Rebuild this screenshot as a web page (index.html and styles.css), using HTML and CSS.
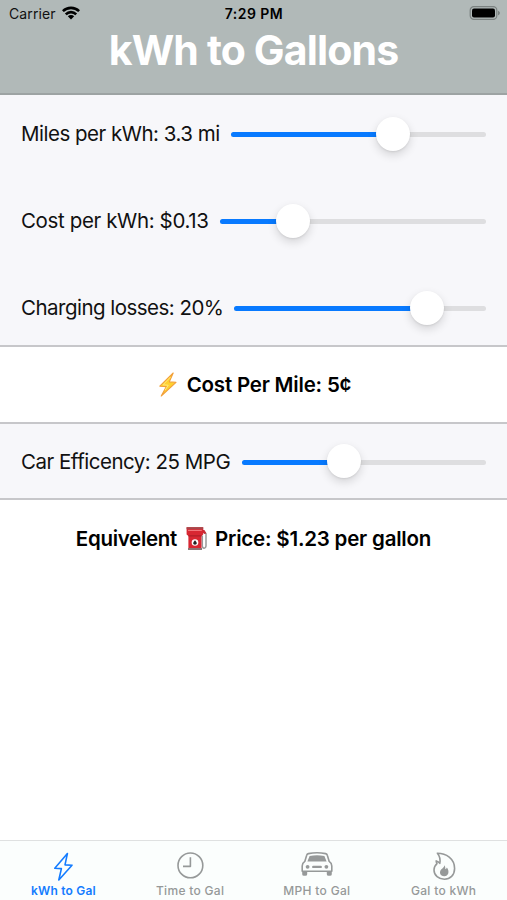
FILE: index.html
```html
<!DOCTYPE html>
<html lang="en">
<head>
<meta charset="utf-8">
<title>kWh to Gallons</title>
<link rel="stylesheet" href="styles.css">
</head>
<body>
<div class="app">
  <header class="header">
    <div class="status">
      <div class="carrier"><span>Carrier</span>
        <svg width="18" height="14" viewBox="0 0 18 14"><g fill="none" stroke="#000" stroke-width="2.6"><path d="M.9 5.2a11.5 11.5 0 0 1 16.2 0"/><path d="M3.8 8.3a7.4 7.4 0 0 1 10.4 0"/></g><path d="M5.8 10.3a4.5 4.5 0 0 1 6.4 0L9 13.6z"/></svg>
      </div>
      <div class="time">7:29 PM</div>
      <svg class="battery" width="31" height="14" viewBox="0 0 31 14"><rect x="1.2" y=".7" width="26.6" height="12.6" rx="3.6" fill="none" stroke="#7b8281" stroke-width="1.2"/><rect x="3" y="2.5" width="23" height="9" rx="2"/><path d="M29 4.7c2.5.8 2.5 3.8 0 4.6z" fill="#7b8281"/></svg>
    </div>
    <h1 class="title">kWh to Gallons</h1>
  </header>
  <main>
    <section class="panel">
      <div class="row miles"><label>Miles per kWh: 3.3 mi</label><div class="slider"><div class="fill" style="width:63.5%"></div><div class="knob"></div></div></div>
      <div class="row cost"><label>Cost per kWh: $0.13</label><div class="slider"><div class="fill" style="width:27.3%"></div><div class="knob"></div></div></div>
      <div class="row losses"><label>Charging losses: 20%</label><div class="slider"><div class="fill" style="width:76.6%"></div><div class="knob"></div></div></div>
    </section>
    <section class="result permile">
      <svg width="18" height="25" viewBox="0 0 18 25"><path d="M14.2 1 .8 14.2l6.6.4L2.2 24 17 10.3l-6.7-.4z" fill="#ffd12e" stroke="#f2a03b" stroke-width="1.1" stroke-linejoin="round"/><path d="M11.5 5 4 12.8l5.2.4L6.2 18" fill="none" stroke="#ffe77a"/></svg>
      <span>Cost Per Mile: 5¢</span>
    </section>
    <section class="panel single">
      <div class="row efficiency"><label>Car Efficency: 25 MPG</label><div class="slider"><div class="fill" style="width:41.8%"></div><div class="knob"></div></div></div>
    </section>
    <section class="result equivalent">
      <span class="before">Equivelent</span>
      <svg width="22" height="25" viewBox="0 0 22 25"><path d="M17 4.5l3 3.2v12c0 3.5-3.7 3-3.7 0V9.5" fill="none" stroke="#999" stroke-width="1.5"/><path d="M15.8 3.8l2.6.2 2 3.2-2 .8-2.4-2z" fill="#c92c35"/><path d="M.6 1.2h16.6v7.2l-1.7 1.7v12.2H2.4V10.1L.6 8.4z" fill="#d82732"/><path d="M.6 1.2h16.6v2H.6z" fill="#a6474b"/><path d="M2 4.4h13.8" stroke="#f58084"/><path d="M2.4 9.9h13.1" stroke="#a51d27"/><path d="M2 22h14v2H2z" fill="#8d7575"/><circle cx="9" cy="16.5" r="3.3" fill="#fff"/><path d="M9 14.3c2.5 2.4 2.2 4.4 0 4.4s-2.5-2 0-4.4" fill="#222"/></svg>
      <span class="after">Price: $1.23 per gallon</span>
    </section>
  </main>
  <nav class="tabs">
    <a class="tab active"><svg width="30" height="30" viewBox="0 0 30 30"><path d="M19.4 2.6 6.8 17.3l6.6.3L10.8 29 24 14.2l-7-.3z"/></svg><span>kWh to Gal</span></a>
    <a class="tab time-tab"><svg width="30" height="30" viewBox="0 0 30 30"><circle cx="15.4" cy="14.4" r="12.4"/><path d="M15.4 6.2v9.2H8"/></svg><span>Time to Gal</span></a>
    <a class="tab mph"><svg width="32" height="30" viewBox="0 0 32 30"><path d="M7.4 2.6Q16 .8 24.6 2.6q1.4.3 1.8 1.8l1.8 6q2.6 1.7 2.6 4.5v5.3H1.2v-5.3q0-2.8 2.6-4.5l1.8-6q.4-1.5 1.8-1.8z"/><path class="solid" d="M8.6 4.9Q16 3.7 23.4 4.9L25.6 10.4H6.4zM1.2 20h5v3.2q0 1.6-1.8 1.6H3q-1.8 0-1.8-1.6zm24.6 0h5v3.2q0 1.6-1.8 1.6h-1.4q-1.8 0-1.8-1.6z"/><circle class="solid" cx="6.6" cy="15.8" r="1.9"/><circle class="solid" cx="25.4" cy="15.8" r="1.9"/><path d="M12.3 15.9h7.4" stroke-width="2.4" stroke-linecap="round"/></svg><span>MPH to Gal</span></a>
    <a class="tab flame"><svg width="30" height="30" viewBox="0 0 30 30"><path d="M8.4 2.2C17 2.2 25.6 7.5 25.6 17.6c0 6.6-4.5 10.6-10.2 10.6S5 24.5 5 18.9c0-2.8 1.2-4.7 3-6.3-.6-1-.9-2-.8-2.7 1.5.5 2.6 1.2 3.6 2.4.7-3.8.1-7-2.4-10.1z"/><path class="solid" d="M15.5 14.2c1.1 2 .7 3 .8 4 .9-.3 1.4-.9 1.6-1.7 3 4 1.5 8.8-2.6 8.8-4.4 0-5.5-4.5-2.9-7 1.3-1.2 2.8-2.2 3.1-4.1z"/></svg><span>Gal to kWh</span></a>
  </nav>
</div>
</body>
</html>
```
FILE: styles.css
```css
* { box-sizing: border-box; }
body { margin: 0; background: #fff; color: #111; font-family: Inter, "Liberation Sans", sans-serif; }
.app { height: 900px; display: flex; flex-direction: column; }
svg { display: block; flex: none; }
.header { height: 95px; background: #b1b9b8; border-bottom: 2px solid #9da3a3; }
.status { height: 28px; padding: 0 7px 0 9px; display: grid; grid-template-columns: 1fr auto 1fr; align-items: center; font-size: 14px; line-height: 28px; }
.carrier { display: flex; align-items: center; gap: 6px; letter-spacing: .1px; }
.carrier svg { margin-top: -3px; }
.time { font-weight: 600; font-size: 14px; color: #000; letter-spacing: .45px; margin-right: 1px; }
.battery { justify-self: end; margin-top: -2px; }
.title { margin: 0; color: #fff; font-size: 41px; line-height: 45px; font-weight: 700; text-align: center; letter-spacing: -.85px; white-space: nowrap; }
main { flex: 1; }
.panel { background: #f7f7fa; height: 252px; padding: 0 21px; border-bottom: 2px solid #c7c7ca; font-size: 20.5px; }
.single { height: 78px; border-top: 2px solid #c7c7ca; }
.row { display: flex; align-items: center; gap: 11px; height: 87px; padding-bottom: 10px; }
.single .row { height: 74px; padding: 0; }
.row label { flex: none; white-space: nowrap; }
.miles label { width: 199px; letter-spacing: -.5px; }
.cost label { width: 188px; letter-spacing: -.37px; }
.losses label { width: 202px; letter-spacing: -.52px; }
.efficiency label { width: 210px; letter-spacing: -.49px; }
.slider { flex: 1; height: 5px; margin-top: 2px; border-radius: 3px; background: #dedee0; display: flex; align-items: center; }
.fill { height: 5px; border-radius: 3px; background: #087aff; flex: none; }
.knob { width: 34px; height: 34px; margin: -2px 0 0 -17px; border-radius: 50%; background: #fff; flex: none; box-shadow: 0 4px 10px rgba(0,0,0,.14), 0 1px 2px rgba(0,0,0,.08); }
.result { height: 75px; display: flex; justify-content: center; align-items: center; font-size: 20.5px; font-weight: 600; color: #000; white-space: nowrap; letter-spacing: -.3px; }
.permile { padding-left: 3px; letter-spacing: -.2px; }
.permile svg { margin-right: 10px; }
.equivalent { height: 76px; }
.equivalent svg { margin: 0 7px 0 9px; }
.equivalent .after { letter-spacing: -.2px; }
.tabs { height: 60px; border-top: 1px solid #dfe1e1; background: #fbfefd; display: grid; grid-template-columns: repeat(4, 1fr); color: #969999; }
.tab { display: flex; flex-direction: column; align-items: center; padding-top: 10px; font-size: 12px; line-height: 16px; font-weight: 500; letter-spacing: .3px; }
.tab svg { fill: none; stroke: currentColor; stroke-width: 1.6; stroke-linejoin: round; }
.tab .solid { fill: currentColor; stroke: none; }
.tab span { margin-top: 2px; white-space: nowrap; }
.active { color: #147cff; font-weight: 600; letter-spacing: .2px; }
```
